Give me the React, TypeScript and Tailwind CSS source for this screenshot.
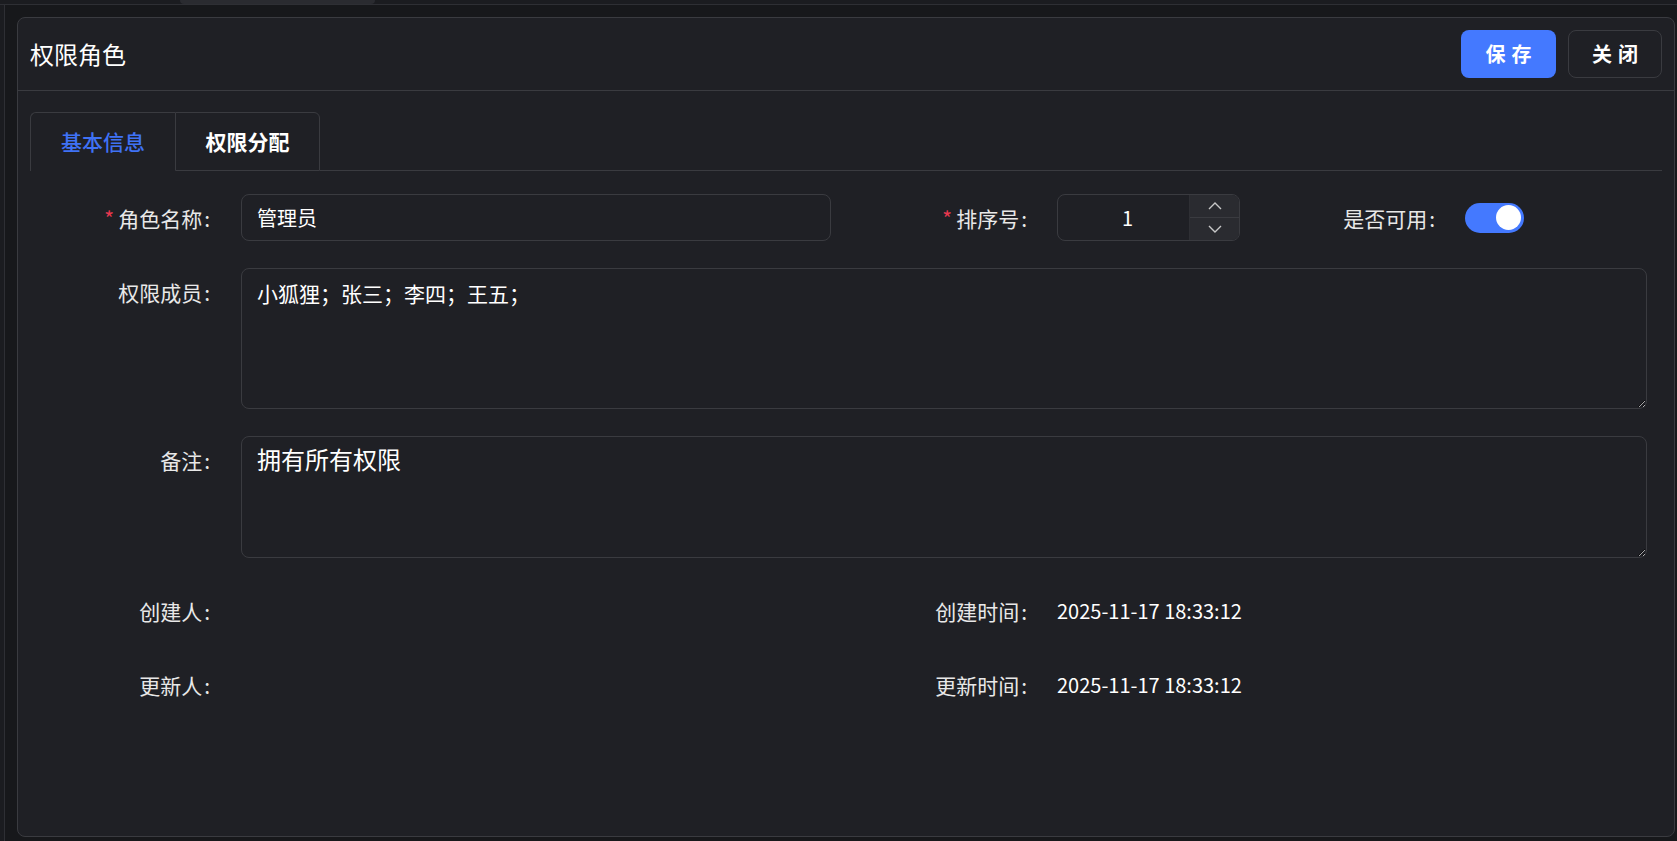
import { useState } from 'react';

const font = { fontFamily: '"Noto Sans CJK SC", "Noto Sans", sans-serif' };

function Label({ text, required, width }: { text: string; required?: boolean; width: string }) {
  return (
    <div className={`${width} shrink-0 text-right text-[21px] leading-[30px] text-[#e8e8e8]`}>
      {required && <span className="mr-1 text-[#e8384f]">*</span>}
      {text}
      <span className="ml-[2px]">:</span>
    </div>
  );
}

function Toggle({ on, onChange }: { on: boolean; onChange: (v: boolean) => void }) {
  return (
    <button
      onClick={() => onChange(!on)}
      className={`flex h-[30px] w-[59px] items-center rounded-full px-[3px] ${on ? 'justify-end bg-[#4479ff]' : 'justify-start bg-[#4a4b50]'}`}
    >
      <span className="h-[25px] w-[25px] rounded-full bg-white" />
    </button>
  );
}

export default function App() {
  const [enabled, setEnabled] = useState(true);
  const [sort, setSort] = useState(1);
  const [tab, setTab] = useState(0);

  return (
    <div className="flex h-[841px] w-full flex-col overflow-hidden bg-[#17181b] text-[#e6e6e6]" style={font}>
      {/* top strip */}
      <div className="flex h-[5px] shrink-0 border-b border-[#2e2f34] bg-[#1b1c20]">
        <div className="w-[180px]" />
        <div className="w-[195px] rounded-b-md bg-[#2a2b30]" />
      </div>

      <div className="flex min-h-0 flex-1">
        <div className="w-[5px] shrink-0 border-r border-[#2e2f34] bg-[#1b1c20]" />

        <div className="ml-[12px] mr-[2px] mt-[12px] mb-[4px] flex min-w-0 flex-1 flex-col rounded-lg border border-[#3a3b40] bg-[#1f2025]">
          {/* header */}
          <div className="flex h-[73px] shrink-0 items-center justify-between border-b border-[#3a3b40] pl-[12px] pr-[12px]">
            <div className="text-[24px] text-white">权限角色</div>
            <div className="flex gap-[12px]">
              <button className="h-[48px] w-[95px] rounded-lg bg-[#4479ff] pl-[6px] text-[20px] font-semibold tracking-[6px] text-white">
                保存
              </button>
              <button className="h-[48px] w-[94px] rounded-lg border border-[#3a3b40] pl-[6px] text-[20px] font-semibold tracking-[6px] text-white">
                关闭
              </button>
            </div>
          </div>

          {/* tabs */}
          <div className="mx-[12px] mt-[21px] flex h-[59px] shrink-0">
            {['基本信息', '权限分配'].map((t, i) => (
              <button
                key={t}
                onClick={() => setTab(i)}
                className={`h-full w-[145px] border-t border-[#3a3b40] text-[21px] ${i === 0 ? 'rounded-tl-md border-l' : 'rounded-tr-md border-l border-r'} ${
                  tab === i ? 'font-medium text-[#3f72f5]' : 'border-b font-semibold text-white'
                }`}
              >
                {t}
              </button>
            ))}
            <div className="flex-1 border-b border-[#3a3b40]" />
          </div>

          {/* form */}
          <div className="flex flex-col pl-[12px] pr-[27px]">
            <div className="mt-[23px] flex h-[47px] items-center">
              <Label text="角色名称" required width="w-[180px]" />
              <input
                readOnly
                value="管理员"
                className="ml-[31px] h-[47px] w-[590px] rounded-lg border border-[#3a3b40] bg-transparent px-[15px] text-[20px] text-white outline-none"
              />
              <Label text="排序号" required width="w-[196px]" />
              <div className="ml-[30px] flex h-[47px] w-[183px] overflow-hidden rounded-lg border border-[#3a3b40]">
                <div className="flex flex-1 items-center justify-center pl-[8px] text-[20px] text-white">{sort}</div>
                <div className="flex w-[50px] flex-col border-l border-[#2e2f34] bg-[#2a2b30]">
                  <button onClick={() => setSort(sort + 1)} className="flex flex-1 items-center justify-center border-b border-[#3a3b40] text-[#c8c8c8]">
                    <svg width="14" height="8" viewBox="0 0 14 8" fill="none" stroke="currentColor" strokeWidth="1.4">
                      <path d="M1 7L7 1L13 7" />
                    </svg>
                  </button>
                  <button onClick={() => setSort(Math.max(0, sort - 1))} className="flex flex-1 items-center justify-center text-[#c8c8c8]">
                    <svg width="14" height="8" viewBox="0 0 14 8" fill="none" stroke="currentColor" strokeWidth="1.4">
                      <path d="M1 1L7 7L13 1" />
                    </svg>
                  </button>
                </div>
              </div>
              <Label text="是否可用" width="w-[195px]" />
              <div className="ml-[30px]">
                <Toggle on={enabled} onChange={setEnabled} />
              </div>
            </div>

            <div className="mt-[27px] flex">
              <div className="pt-[9px]">
                <Label text="权限成员" width="w-[180px]" />
              </div>
              <textarea
                readOnly
                value="小狐狸；张三；李四；王五；"
                className="ml-[31px] h-[141px] flex-1 rounded-lg border border-[#3a3b40] bg-transparent px-[15px] pt-[9px] text-[21px] leading-[30px] text-white outline-none [color-scheme:dark]"
              />
            </div>

            <div className="mt-[27px] flex">
              <div className="pt-[9px]">
                <Label text="备注" width="w-[180px]" />
              </div>
              <textarea
                readOnly
                value="拥有所有权限"
                className="ml-[31px] h-[122px] flex-1 rounded-lg border border-[#3a3b40] bg-transparent px-[15px] pt-[7px] text-[24px] leading-[30px] text-white outline-none [color-scheme:dark]"
              />
            </div>

            <div className="mt-[38px] flex items-center">
              <Label text="创建人" width="w-[180px]" />
              <div className="w-[621px]" />
              <Label text="创建时间" width="w-[196px]" />
              <div className="ml-[30px] text-[20px] text-white">2025-11-17 18:33:12</div>
            </div>

            <div className="mt-[44px] flex items-center">
              <Label text="更新人" width="w-[180px]" />
              <div className="w-[621px]" />
              <Label text="更新时间" width="w-[196px]" />
              <div className="ml-[30px] text-[20px] text-white">2025-11-17 18:33:12</div>
            </div>
          </div>
        </div>
      </div>
    </div>
  );
}
